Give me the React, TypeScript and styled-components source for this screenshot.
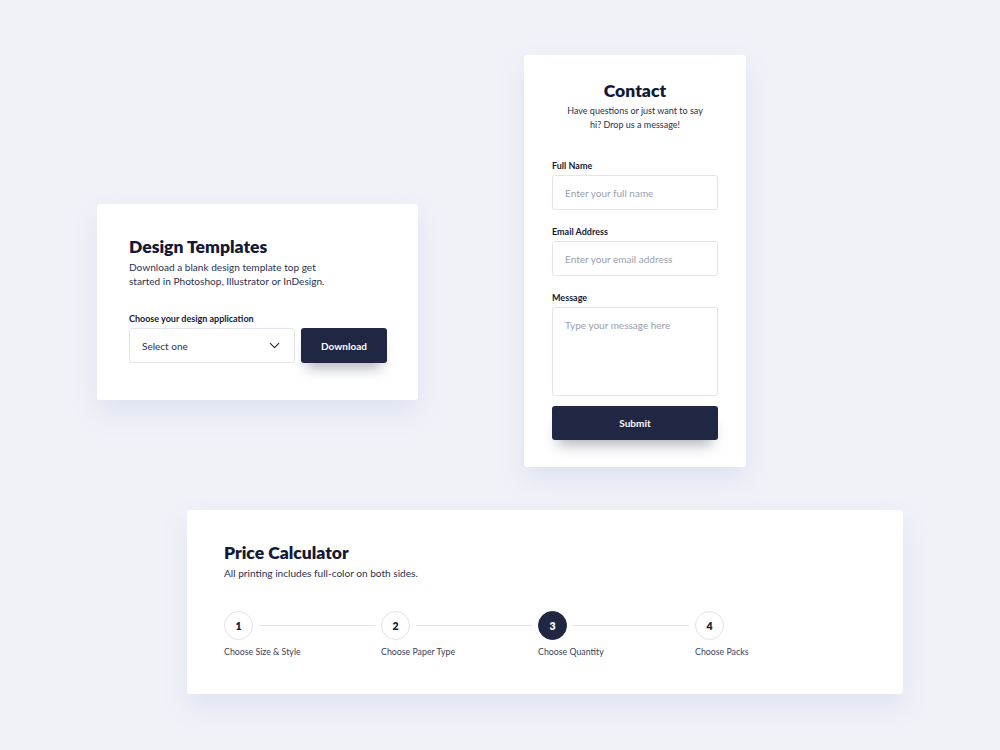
import React from "react";
import styled, { createGlobalStyle } from "styled-components";
import { ChevronDown } from "lucide-react";

const GlobalStyle = createGlobalStyle`
    * {
        box-sizing: border-box;
    }
    body {
        margin: 0;
        background: #f1f2f8;
        font-family: "Lato", "Open Sans", sans-serif;
        color: #1c2340;
    }
`;

const navy = "#1f2743";

const Page = styled.div`
    width: 1000px;
    height: 750px;
    padding: 55px 0 0 97px;
    overflow: hidden;
`;

const TopRow = styled.div`
    display: flex;
    align-items: flex-start;
    gap: 106px;
`;

const Card = styled.div`
    background: #fff;
    border-radius: 3px;
    box-shadow: 0 12px 24px rgba(200, 206, 235, 0.45);
`;

const TemplatesCard = styled(Card)`
    width: 321px;
    height: 196px;
    margin-top: 149px;
    padding: 32px 31px 0 32px;
`;

const ContactCard = styled(Card)`
    width: 222px;
    height: 412px;
    padding: 25px 28px 0 28px;
`;

const PriceCard = styled(Card)`
    width: 716px;
    height: 184px;
    margin: 43px 0 0 90px;
    padding: 32px 38px 0 37px;
`;

const Title = styled.h2<{ $center?: boolean }>`
    margin: 0;
    font-size: 17.5px;
    font-weight: 800;
    line-height: 22px;
    color: #141a36;
    text-align: ${(p) => (p.$center ? "center" : "left")};
`;

const Text = styled.p<{ $center?: boolean; $size?: number }>`
    margin: 2px 0 0;
    font-size: ${(p) => p.$size || 10.1}px;
    line-height: 14px;
    color: #2a3150;
    text-align: ${(p) => (p.$center ? "center" : "left")};
`;

const Label = styled.div`
    font-size: 9px;
    font-weight: 700;
    line-height: 11px;
    color: #141a36;
    margin-bottom: 4px;
`;

const TemplatesForm = styled.div`
    margin-top: 25px;
`;

const Row = styled.div`
    display: flex;
    gap: 6px;
`;

const Select = styled.div`
    width: 166px;
    height: 35px;
    border: 1px solid #e3e5ec;
    border-radius: 3px;
    display: flex;
    align-items: center;
    justify-content: space-between;
    padding: 0 11px 0 12px;
    font-size: 10px;
    color: #2a3150;
    svg {
        color: #1c2340;
    }
`;

const Button = styled.button<{ $full?: boolean }>`
    width: ${(p) => (p.$full ? "100%" : "86px")};
    height: ${(p) => (p.$full ? 34 : 35)}px;
    border: none;
    border-radius: 3px;
    background: ${navy};
    color: #fff;
    font-family: inherit;
    font-size: 10px;
    font-weight: 700;
    box-shadow: 0 11px 14px -6px rgba(31, 39, 67, 0.35);
`;

const Fields = styled.div`
    margin-top: 28px;
    display: flex;
    flex-direction: column;
    gap: 16px;
`;

const Input = styled.div<{ $tall?: boolean }>`
    height: ${(p) => (p.$tall ? 89 : 35)}px;
    border: 1px solid #e3e5ec;
    border-radius: 3px;
    padding: ${(p) => (p.$tall ? "11px" : "0")} 12px 0;
    display: flex;
    align-items: ${(p) => (p.$tall ? "flex-start" : "center")};
    font-size: 10px;
    color: #9a9eae;
`;

const SubmitWrap = styled.div`
    margin-top: 10px;
`;

const Steps = styled.div`
    display: flex;
    margin-top: 31px;
`;

const Step = styled.div`
    width: 157px;
    flex-shrink: 0;
`;

const StepTop = styled.div`
    display: flex;
    align-items: center;
`;

const Circle = styled.div<{ $active?: boolean }>`
    width: 29px;
    height: 29px;
    border-radius: 50%;
    flex-shrink: 0;
    border: 1px solid ${(p) => (p.$active ? navy : "#e0e2e9")};
    background: ${(p) => (p.$active ? navy : "#fff")};
    color: ${(p) => (p.$active ? "#fff" : "#141a36")};
    display: flex;
    align-items: center;
    justify-content: center;
    font-size: 10.5px;
    font-weight: 800;
`;

const Line = styled.div`
    height: 1px;
    background: #e1e3ea;
    margin: 0 6px;
    flex: 1;
`;

const StepLabel = styled.div`
    margin-top: 6px;
    font-size: 8.8px;
    color: #3a405a;
`;

const steps = ["Choose Size & Style", "Choose Paper Type", "Choose Quantity", "Choose Packs"];

function App() {
    return (
        <>
            <GlobalStyle />
            <Page>
                <TopRow>
                    <TemplatesCard>
                        <Title>Design Templates</Title>
                        <Text>
                            Download a blank design template top get
                            <br />
                            started in Photoshop, Illustrator or InDesign.
                        </Text>
                        <TemplatesForm>
                            <Label>Choose your design application</Label>
                            <Row>
                                <Select>
                                    Select one
                                    <ChevronDown size={17} strokeWidth={1.5} />
                                </Select>
                                <Button>Download</Button>
                            </Row>
                        </TemplatesForm>
                    </TemplatesCard>
                    <ContactCard>
                        <Title $center>Contact</Title>
                        <Text $center $size={9}>
                            Have questions or just want to say
                            <br />
                            hi? Drop us a message!
                        </Text>
                        <Fields>
                            <div>
                                <Label>Full Name</Label>
                                <Input>Enter your full name</Input>
                            </div>
                            <div>
                                <Label>Email Address</Label>
                                <Input>Enter your email address</Input>
                            </div>
                            <div>
                                <Label>Message</Label>
                                <Input $tall>Type your message here</Input>
                            </div>
                        </Fields>
                        <SubmitWrap>
                            <Button $full>Submit</Button>
                        </SubmitWrap>
                    </ContactCard>
                </TopRow>
                <PriceCard>
                    <Title>Price Calculator</Title>
                    <Text>All printing includes full-color on both sides.</Text>
                    <Steps>
                        {steps.map((s, i) => (
                            <Step key={s}>
                                <StepTop>
                                    <Circle $active={i === 2}>{i + 1}</Circle>
                                    {i < steps.length - 1 && <Line />}
                                </StepTop>
                                <StepLabel>{s}</StepLabel>
                            </Step>
                        ))}
                    </Steps>
                </PriceCard>
            </Page>
        </>
    );
}

export default App;
